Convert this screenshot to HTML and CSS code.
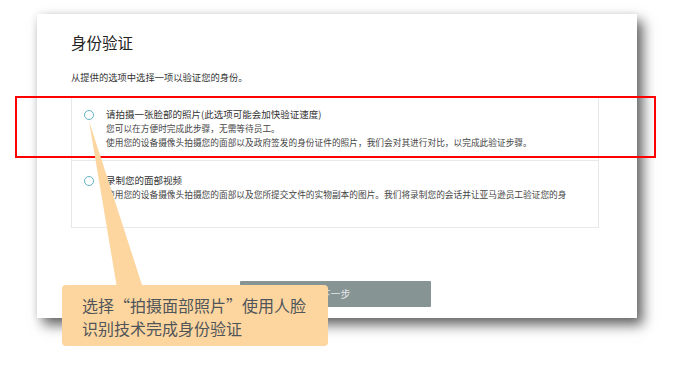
FILE: index.html
```html
<!DOCTYPE html>
<html lang="zh-CN">
<head>
  <meta charset="UTF-8">
  <meta name="viewport" content="width=device-width, initial-scale=1.0">
  <title>身份验证</title>
  <link rel="stylesheet" href="styles.css">
</head>
<body>

  <div class="page">
    <div class="card">
      <h2>身份验证</h2>
      <p class="intro">从提供的选项中选择一项以验证您的身份。</p>

      <div class="options">
        <label class="option">
          <span class="radio"></span>
          <span class="option-text">
            <span class="option-title">请拍摄一张脸部的照片(此选项可能会加快验证速度)</span>
            <span class="option-desc">您可以在方便时完成此步骤，无需等待员工。</span>
            <span class="option-desc">使用您的设备摄像头拍摄您的面部以及政府签发的身份证件的照片，我们会对其进行对比，以完成此验证步骤。</span>
          </span>
        </label>
        <label class="option option-last">
          <span class="radio"></span>
          <span class="option-text">
            <span class="option-title">录制您的面部视频</span>
            <span class="option-desc">使用您的设备摄像头拍摄您的面部以及您所提交文件的实物副本的图片。我们将录制您的会话并让亚马逊员工验证您的身</span>
          </span>
        </label>
      </div>

      <button class="next-btn" type="button">下一步</button>
    </div>
  </div>

  <!-- annotation layer -->
  <div class="highlight"></div>
  <svg class="pointer" width="691" height="366" viewBox="0 0 691 366">
    <polygon points="89,121 117,288 143,288" fill="#fdd59f"/>
  </svg>
  <div class="callout">选择“拍摄面部照片”使用人脸<br>识别技术完成身份验证</div>

</body>
</html>
```

FILE: styles.css
```css
body {
  margin: 0;
  background-color: #fff;
  font-family: "Noto Sans CJK SC", "Noto Sans", sans-serif;
  color: #333;
  position: relative;
  width: 691px;
  height: 366px;
  overflow: hidden;
}

.page {
  padding: 14px 0 0 37px;
}

.card {
  width: 600px;
  height: 304px;
  box-sizing: border-box;
  padding: 17px 38px 0 34px;
  background-color: #fff;
  box-shadow: 6px 7px 12px rgba(0, 0, 0, 0.6), 0 0 8px rgba(0, 0, 0, 0.08);
  display: flex;
  flex-direction: column;
}

h2 {
  margin: 0;
  font-size: 15.5px;
  line-height: 22px;
  font-weight: normal;
  color: #222;
}

.intro {
  margin: 17px 0 12px;
  font-size: 9.3px;
  line-height: 14px;
  color: #333;
}

.options {
  width: 528px;
  display: flex;
  flex-direction: column;
}

.option {
  display: flex;
  gap: 12px;
  padding: 10px 12px 11px;
  border: 1px solid #e8e8e8;
}

.option-last {
  border-top: none;
  padding-top: 12px;
  padding-bottom: 25px;
}

.radio {
  flex: none;
  width: 10px;
  height: 10px;
  box-sizing: border-box;
  margin-top: 2.5px;
  border: 1px solid #63b3c3;
  border-radius: 50%;
}

.option-text {
  display: flex;
  flex-direction: column;
  min-width: 0;
  overflow: hidden;
}

.option-title {
  font-size: 9.5px;
  line-height: 15px;
  color: #333;
  white-space: nowrap;
}

.option-desc {
  font-size: 8.7px;
  line-height: 13.5px;
  color: #444;
  white-space: nowrap;
}

.next-btn {
  align-self: flex-start;
  margin: 53px 0 0 169px;
  width: 191px;
  height: 26px;
  padding: 0;
  border: none;
  border-radius: 1px;
  background-color: #879494;
  color: #e4e8e8;
  font-family: inherit;
  font-size: 10px;
}

.highlight {
  position: absolute;
  left: 15px;
  top: 96px;
  width: 641px;
  height: 62px;
  box-sizing: border-box;
  border: 2px solid #f00;
}

.pointer {
  position: absolute;
  left: 0;
  top: 0;
}

.callout {
  position: absolute;
  left: 62px;
  top: 285px;
  width: 266px;
  height: 61px;
  box-sizing: border-box;
  padding: 9px 0 0 20px;
  border-radius: 4px;
  background-color: #fdd59f;
  color: #50555a;
  font-size: 16px;
  line-height: 23px;
}
```
